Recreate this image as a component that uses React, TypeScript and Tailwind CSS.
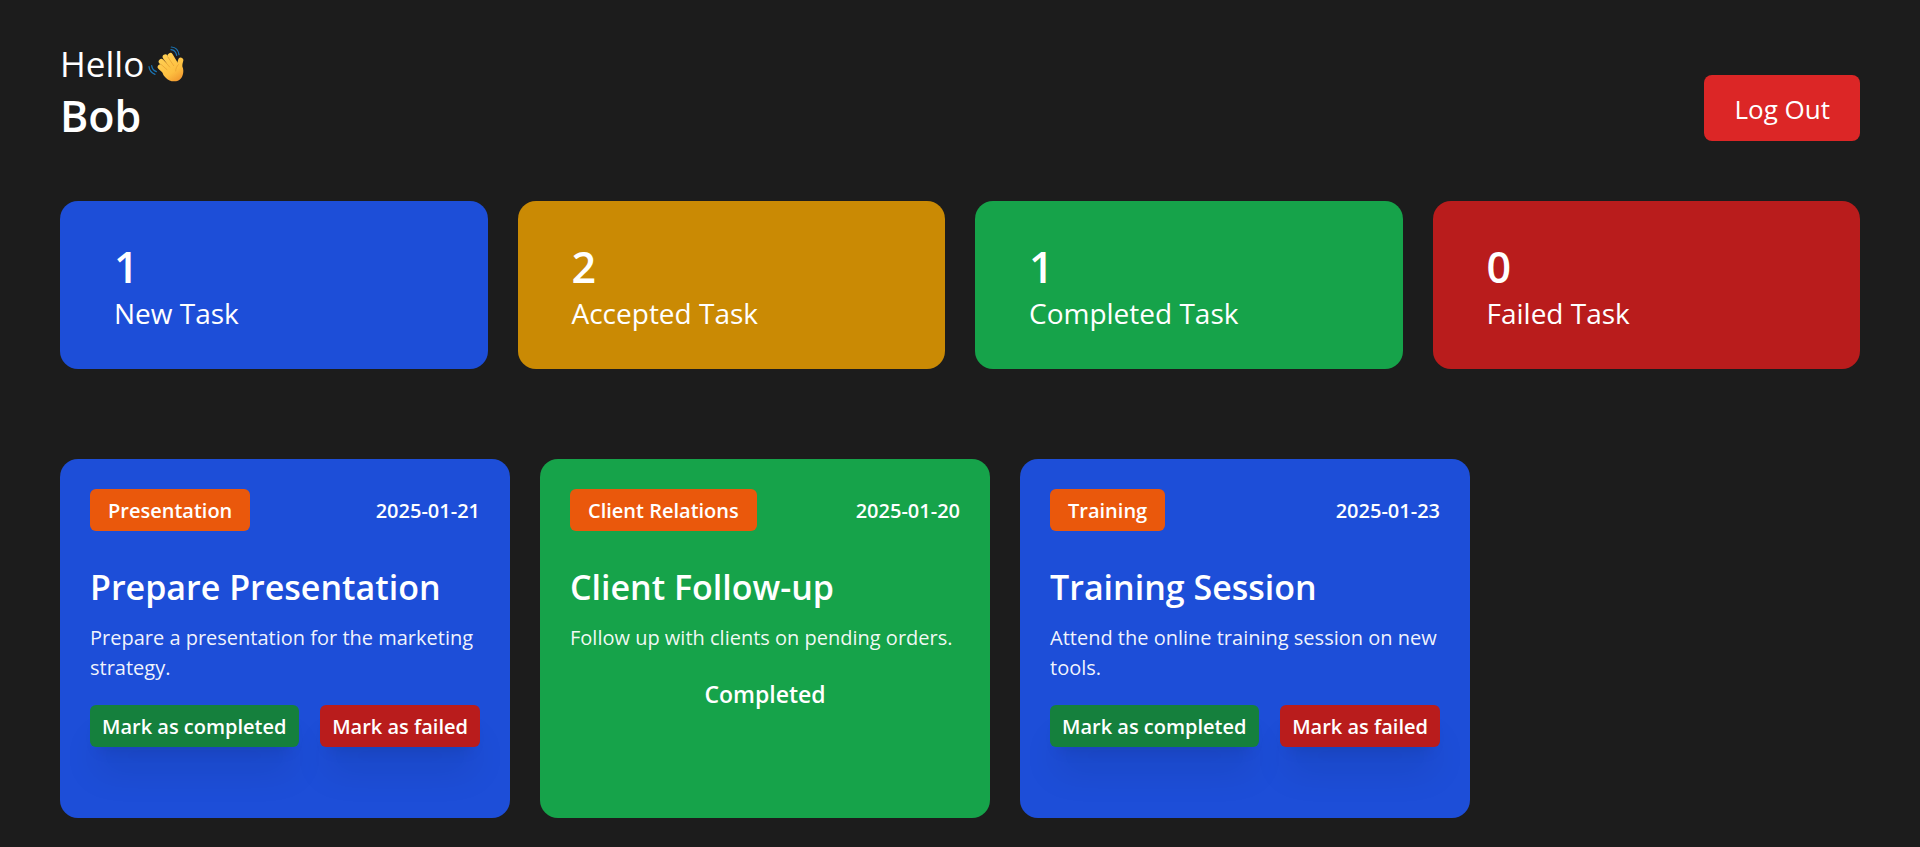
type Stat = { count: number; label: string; color: string };
type Task = {
  category: string;
  date: string;
  title: string;
  description: string;
  done: boolean;
};

const stats: Stat[] = [
  { count: 1, label: "New Task", color: "bg-[#1d4ed8]" },
  { count: 2, label: "Accepted Task", color: "bg-[#ca8a04]" },
  { count: 1, label: "Completed Task", color: "bg-[#16a34a]" },
  { count: 0, label: "Failed Task", color: "bg-[#b91c1c]" },
];

const tasks: Task[] = [
  {
    category: "Presentation",
    date: "2025-01-21",
    title: "Prepare Presentation",
    description: "Prepare a presentation for the marketing strategy.",
    done: false,
  },
  {
    category: "Client Relations",
    date: "2025-01-20",
    title: "Client Follow-up",
    description: "Follow up with clients on pending orders.",
    done: true,
  },
  {
    category: "Training",
    date: "2025-01-23",
    title: "Training Session",
    description: "Attend the online training session on new tools.",
    done: false,
  },
];

const actionShadow = "shadow-[0_30px_37px_-7px_rgb(0_0_0/0.1),0_12px_15px_-9px_rgb(0_0_0/0.1)]";

function WavingHand() {
  return (
    <svg viewBox="12 17 108 108" className="size-9" role="img" aria-label="Waving hand">
      <defs>
        <linearGradient id="skin" gradientUnits="userSpaceOnUse" x1="50" y1="40" x2="108" y2="124">
          <stop offset="0" stopColor="#ffd257" />
          <stop offset="0.65" stopColor="#fdbf40" />
          <stop offset="1" stopColor="#f0932c" />
        </linearGradient>
      </defs>
      <g fill="none" stroke="#1b74b3" strokeWidth="3.6" strokeLinecap="round">
        <path d="M82 20c13 1 21 9 23 23" />
        <path d="M81 28c9 1 15 7 17 17" />
        <path d="M15 79c1 11 8 19 18 23" />
        <path d="M23 76c1 9 6 15 14 18" />
      </g>
      <g fill="none" stroke="url(#skin)" strokeWidth="16" strokeLinecap="round">
        <path d="M49 80l27 24" />
        <path d="M52 64l28 28" />
        <path d="M64 50l26 36" />
        <path d="M79 46l23 38" />
        <path d="M110 60c-3 8-4 16-3 30" />
      </g>
      <path
        d="M62 78c10-16 28-18 41-8 11 4 15 11 15 21 0 19-10 32-28 32-10 0-17-3-24-10-12-11-14-21-4-35z"
        fill="url(#skin)"
      />
      <g fill="none" stroke="#e59c30" strokeWidth="2" strokeLinecap="round">
        <path d="M51 72l18 16" />
        <path d="M58 58l19 22" />
        <path d="M71 49l18 27" />
        <path d="M103 73c-5 5-8 12-8 19" />
      </g>
    </svg>
  );
}

function StatCard({ count, label, color }: Stat) {
  return (
    <div className={`rounded-[18px] px-[54px] pt-[41px] pb-[35px] ${color}`}>
      <h2 className="text-[43px] leading-[50px] font-semibold">{count}</h2>
      <h3 className="text-[28px] leading-[42px]">{label}</h3>
    </div>
  );
}

function TaskCard({ category, date, title, description, done }: Task) {
  return (
    <article
      className={`flex w-[450px] shrink-0 flex-col rounded-[18px] p-[30px] ${done ? "bg-[#16a34a]" : "bg-[#1d4ed8]"}`}
    >
      <div className="flex items-center justify-between text-[20px] leading-[40px] font-semibold">
        <span className="rounded-md bg-[#ea580c] px-[18px] pt-[2px]">{category}</span>
        <time className="pt-[2px]" dateTime={date}>
          {date}
        </time>
      </div>
      <h2 className="mt-8 text-[34px] leading-[48px] font-semibold">{title}</h2>
      <p className="mt-3 text-[20px] leading-[30px] text-white/95">{description}</p>
      {done ? (
        <p className="mt-[22px] text-center text-[23px] leading-[38px] font-semibold">Completed</p>
      ) : (
        <div className="mt-[22px] mb-[41px] flex justify-between text-[20px] leading-[40px] font-semibold">
          <button type="button" className={`rounded-md bg-[#15803d] px-3 pt-[2px] ${actionShadow}`}>
            Mark as completed
          </button>
          <button type="button" className={`rounded-md bg-[#b91c1c] px-3 pt-[2px] ${actionShadow}`}>
            Mark as failed
          </button>
        </div>
      )}
    </article>
  );
}

export default function App() {
  return (
    <main className="min-h-screen bg-[#1c1c1c] px-[60px] pt-10 pb-[29px] font-['Open_Sans','Noto_Sans',sans-serif] text-white">
      <header className="flex items-end justify-between">
        <h1 className="text-[35px] leading-[48px]">
          <span className="flex items-center gap-1">
            Hello <WavingHand />
          </span>
          <span className="block pt-[2px] text-[43px] leading-[51px] font-semibold">Bob</span>
        </h1>
        <button type="button" className="rounded-lg bg-[#dc2626] px-[30px] pt-[2px] text-[26px] leading-[64px]">
          Log Out
        </button>
      </header>
      <section className="mt-[60px] grid grid-cols-4 gap-[30px]">
        {stats.map((s) => (
          <StatCard key={s.label} {...s} />
        ))}
      </section>
      <section className="mt-[90px] flex gap-[30px] overflow-x-auto">
        {tasks.map((t) => (
          <TaskCard key={t.title} {...t} />
        ))}
      </section>
    </main>
  );
}
